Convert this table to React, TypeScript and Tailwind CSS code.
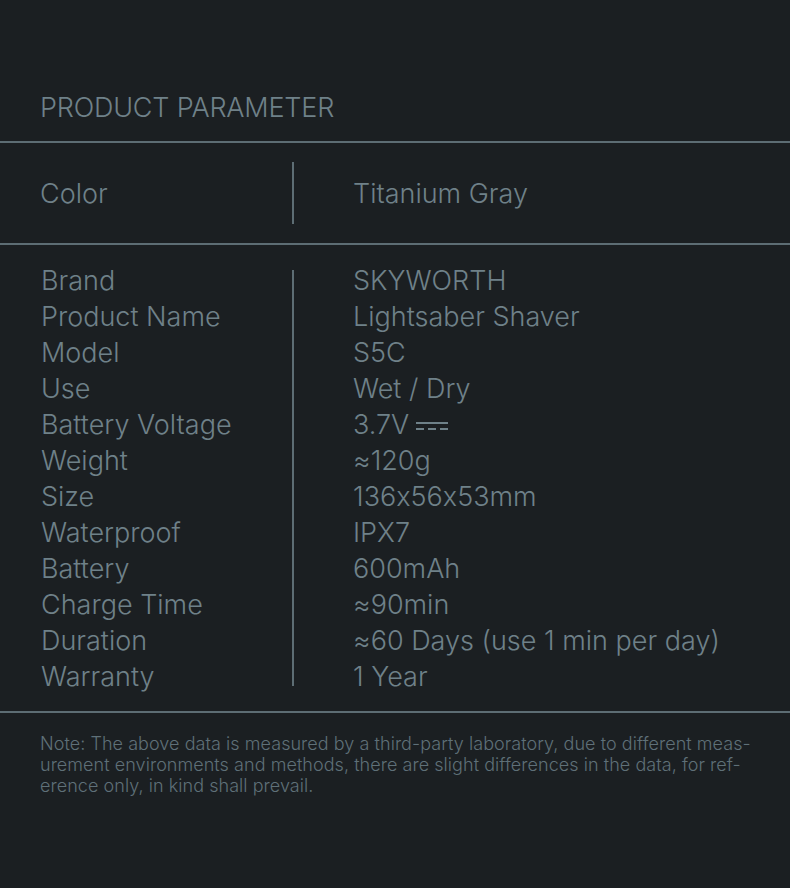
const rows: [string, React.ReactNode][] = [
  ["Brand", "SKYWORTH"],
  ["Product Name", "Lightsaber Shaver"],
  ["Model", "S5C"],
  ["Use", "Wet / Dry"],
  ["Battery Voltage", <DcValue key="v" />],
  ["Weight", "≈120g"],
  ["Size", "136x56x53mm"],
  ["Waterproof", "IPX7"],
  ["Battery", "600mAh"],
  ["Charge Time", "≈90min"],
  ["Duration", "≈60 Days (use 1 min per day)"],
  ["Warranty", "1 Year"],
];

function DcValue() {
  return (
    <span className="flex items-center gap-[7px]">
      3.7V
      <svg width="32" height="12" viewBox="0 0 32 12" className="mt-[2px]">
        <rect x="0" y="2" width="32" height="2" fill="#6f8189" />
        <rect x="0" y="8" width="8" height="2" fill="#6f8189" />
        <rect x="12" y="8" width="8" height="2" fill="#6f8189" />
        <rect x="24" y="8" width="8" height="2" fill="#6f8189" />
      </svg>
    </span>
  );
}

export default function App() {
  return (
    <div
      className="w-[790px] h-[888px] bg-[#1b1f22] text-[#6f8189] overflow-hidden [font-feature-settings:'calt'_0]"
      style={{ fontFamily: "Inter, 'Liberation Sans', sans-serif" }}
    >
      <div className="pt-[92px] pb-[17px] px-[40px] text-[27px] font-light leading-[32px] tracking-[-0.2px]">
        PRODUCT PARAMETER
      </div>
      <div className="h-[2px] bg-[#5d6d74]" />

      <div className="grid grid-cols-[292px_2px_1fr] items-stretch pt-[19px] pb-[19px]">
        <div className="pl-[40px] flex items-center text-[27px] font-light pt-[2px]">Color</div>
        <div className="bg-[#5d6d74] h-[62px]" />
        <div className="pl-[59px] flex items-center text-[27px] font-light pt-[2px]">Titanium Gray</div>
      </div>
      <div className="h-[2px] bg-[#5d6d74]" />

      <div className="grid grid-cols-[292px_2px_1fr] pt-[18px] pb-[16px]">
        <div className="pl-[41px] flex flex-col text-[27px] font-light leading-[36px]">
          {rows.map(([k]) => (
            <div key={k} className="h-[36px] flex items-center">{k}</div>
          ))}
        </div>
        <div className="bg-[#5d6d74] mt-[7px] mb-[9px]" />
        <div className="pl-[59px] flex flex-col text-[27px] font-light leading-[36px]">
          {rows.map(([k, v]) => (
            <div key={k} className="h-[36px] flex items-center">{v}</div>
          ))}
        </div>
      </div>
      <div className="h-[2px] bg-[#5d6d74]" />

      <div className="px-[40px] pt-[20px] text-[18px] leading-[21px] tracking-[0.05px] text-[#5f7078] font-light whitespace-nowrap">
        <div>Note: The above data is measured by a third-party laboratory, due to different meas-</div>
        <div>urement environments and methods, there are slight differences in the data, for ref-</div>
        <div>erence only, in kind shall prevail.</div>
      </div>
    </div>
  );
}
